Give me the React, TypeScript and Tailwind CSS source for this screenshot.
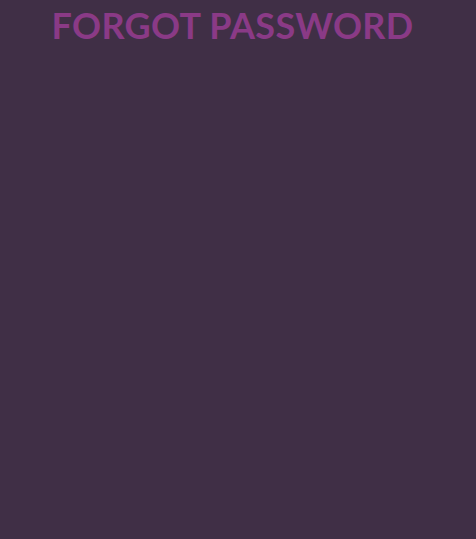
export default function App() {
  return (
    <div className="min-h-screen w-full bg-[#402f46]">
      <div className="flex justify-center pt-[3px] pr-[11px]">
        <h1 className="font-['Lato',sans-serif] text-[36px] font-bold leading-[45px] tracking-[0.3px] text-[#8a3a86]">
          FORGOT PASSWORD
        </h1>
      </div>
    </div>
  )
}
